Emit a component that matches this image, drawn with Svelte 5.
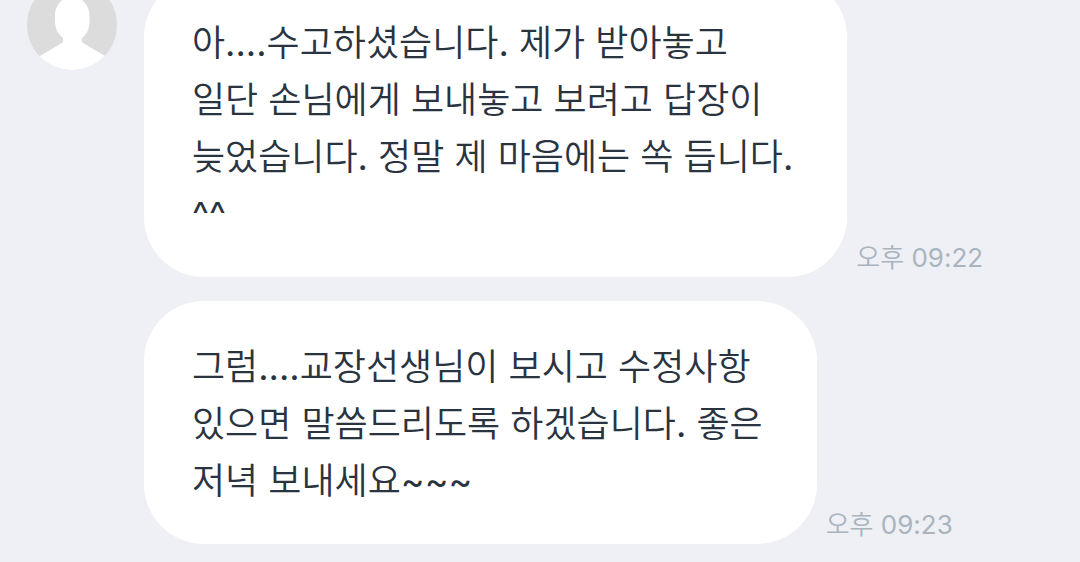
<script>
  const messages = [
    {
      time: '오후 09:22',
      lines: ['아....수고하셨습니다. 제가 받아놓고', '일단 손님에게 보내놓고 보려고 답장이', '늦었습니다. 정말 제 마음에는 쏙 듭니다.', '^^'],
    },
    {
      time: '오후 09:23',
      lines: ['그럼....교장선생님이 보시고 수정사항', '있으면 말씀드리도록 하겠습니다. 좋은', '저녁 보내세요~~~'],
    },
  ];
</script>

<main class="chat">
  <svg class="avatar" viewBox="0 0 90 90" aria-hidden="true">
    <defs><clipPath id="round"><circle cx="45" cy="45" r="45" /></clipPath></defs>
    <g clip-path="url(#round)">
      <rect width="90" height="90" fill="#dcdcdc" />
      <path fill="#fff" d="M45 17C35 17 28 25 28 36V41C28 49 31 54 36 58V61Q36 62.500 34 63.500L13 76V90H78V76L57 63.500Q55 62.500 55 61V58C60 54 62.500 49 62.500 41V36C62.500 25 55 17 45 17Z" />
    </g>
  </svg>
  <div class="thread">
    {#each messages as message}
      <article class="message">
        <p class="bubble">
          {#each message.lines as line}<span class="line">{line}</span>{/each}
        </p>
        <time class="time">{message.time}</time>
      </article>
    {/each}
  </div>
</main>

<style>
  :global(body) {
    background: #eef0f5;
  }
  .chat {
    display: flex;
    align-items: flex-start;
    gap: 27px;
    padding: 0 27px 18px;
    margin-top: -23px;
    font-family: Inter, "Noto Sans CJK KR DemiLight", "Noto Sans CJK KR", sans-serif;
    font-weight: 400;
  }
  .avatar {
    flex: none;
    width: 90px;
    height: 90px;
    margin-top: 3px;
  }
  .thread {
    display: flex;
    flex-direction: column;
    gap: 24px;
    flex: 1;
  }
  .message {
    display: flex;
    align-items: flex-end;
    gap: 9px;
  }
  .bubble {
    margin: 0;
    padding: 38px 54px 34px 48px;
    border-radius: 60px;
    background: #fff;
    color: #2a3441;
    font-size: 36px;
    line-height: 57px;
  }
  .line {
    display: block;
    white-space: nowrap;
  }
  .time {
    color: #a9b4bf;
    font-size: 26px;
    line-height: 38px;
    white-space: nowrap;
  }
</style>
